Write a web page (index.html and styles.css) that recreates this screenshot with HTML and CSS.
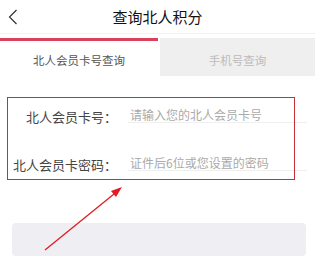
FILE: index.html
```html
<!DOCTYPE html>
<html lang="zh">
<head>
<meta charset="utf-8">
<link rel="stylesheet" href="styles.css">
</head>
<body>
<div class="page">
  <header class="header">
    <span class="back"><svg width="10" height="16" viewBox="0 0 10 16"><path d="M8.5 1 L1.5 8 L8.5 15" fill="none" stroke="#333" stroke-width="1.2"/></svg></span>
    <h1 class="title">查询北人积分</h1>
    <span></span>
  </header>
  <nav class="tabs">
    <div class="tab active">北人会员卡号查询</div>
    <div class="tab">手机号查询</div>
  </nav>
  <form class="form">
    <div class="row">
      <label class="label">北人会员卡号：</label>
      <div class="field">请输入您的北人会员卡号</div>
    </div>
    <div class="row">
      <label class="label">北人会员卡密码：</label>
      <div class="field">证件后6位或您设置的密码</div>
    </div>
    <div class="mark"></div>
  </form>
  <div class="button"></div>
  <svg class="arrow" width="315" height="278" viewBox="0 0 315 278">
    <line x1="45" y1="250" x2="114" y2="194" stroke="#e31b23" stroke-width="1.3"/>
    <polygon points="122,187 111,191 116,197" fill="#e31b23"/>
  </svg>
</div>
</body>
</html>
```
FILE: styles.css
```css
* { box-sizing: border-box; margin: 0; padding: 0; }
body { margin: 0; background: #fff; font-family: "Noto Sans CJK SC", "Noto Sans", sans-serif; }
.page { position: relative; width: 315px; height: 278px; overflow: hidden; }
.header {
  display: grid;
  grid-template-columns: 40px 1fr 40px;
  align-items: center;
  height: 34px;
  border-bottom: 1px solid #f1f1f3;
}
.back { display: flex; padding-left: 8px; padding-top: 1px; }
.title { font-size: 15px; font-weight: 400; color: #111; text-align: center; line-height: 1; }
.tabs { display: flex; gap: 2px; margin-top: 4px; height: 38px; }
.tab {
  flex: 1;
  display: flex; align-items: center; justify-content: center;
  font-size: 11.5px; color: #bbb; background: #efeff0;
  padding-top: 6px;
}
.tab.active {
  flex: 0 0 158px;
  background: #fff; color: #555;
  border-top: 3px solid #d9405c;
  padding-top: 3px;
}
.form { position: relative; margin-top: 21px; }
.row { display: flex; align-items: flex-end; height: 48px; }
.row:first-child { height: 26px; }
.label {
  width: 117px; text-align: right;
  font-size: 13px; color: #444; line-height: 1; padding-bottom: 0;
}
.field {
  margin-left: 11px; width: 179px;
  font-size: 12px; color: #aaa; line-height: 1;
  padding: 0 0 1px 2px;
  border-bottom: 1px solid #efefef;
}
.mark {
  position: absolute; left: 7px; top: 0; width: 288px; height: 83px;
  border: 1px solid #c62f37;
}
.button {
  margin: 52px 9px 0 12px; height: 33px;
  background: #eeeef3; border-radius: 4px;
}
.arrow { position: absolute; left: 0; top: 0; pointer-events: none; }
```
